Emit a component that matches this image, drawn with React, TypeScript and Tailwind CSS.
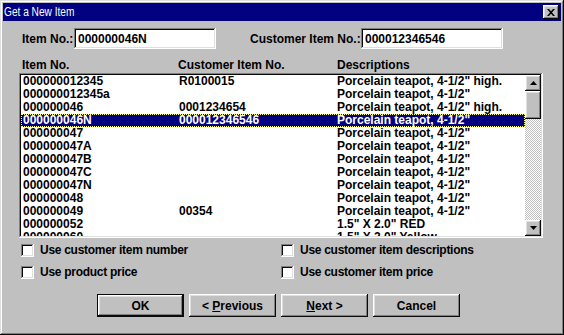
import React from "react";

const btnOut =
  "shadow-[inset_-1px_-1px_#0a0a0a,inset_1px_1px_#ffffff,inset_-2px_-2px_#808080,inset_2px_2px_#dfdfdf]";
const field =
  "shadow-[inset_-1px_-1px_#ffffff,inset_1px_1px_#808080,inset_-2px_-2px_#dfdfdf,inset_2px_2px_#0a0a0a]";

type Row = { item: string; cust: string; desc: string };

const rows: Row[] = [
  { item: "000000012345", cust: "R0100015", desc: 'Porcelain teapot, 4-1/2" high.' },
  { item: "000000012345a", cust: "", desc: 'Porcelain teapot, 4-1/2"' },
  { item: "000000046", cust: "0001234654", desc: 'Porcelain teapot, 4-1/2" high.' },
  { item: "000000046N", cust: "000012346546", desc: 'Porcelain teapot, 4-1/2"' },
  { item: "000000047", cust: "", desc: 'Porcelain teapot, 4-1/2"' },
  { item: "000000047A", cust: "", desc: 'Porcelain teapot, 4-1/2"' },
  { item: "000000047B", cust: "", desc: 'Porcelain teapot, 4-1/2"' },
  { item: "000000047C", cust: "", desc: 'Porcelain teapot, 4-1/2"' },
  { item: "000000047N", cust: "", desc: 'Porcelain teapot, 4-1/2"' },
  { item: "000000048", cust: "", desc: 'Porcelain teapot, 4-1/2"' },
  { item: "000000049", cust: "00354", desc: 'Porcelain teapot, 4-1/2"' },
  { item: "000000052", cust: "", desc: '1.5" X 2.0" RED' },
  { item: "000000060", cust: "", desc: '1.5" X 2.0" Yellow' },
];

function Arrow({ up }: { up: boolean }) {
  return (
    <svg width="7" height="4" viewBox="0 0 7 4" className="block">
      {up ? (
        <polygon points="3.5,0 7,4 0,4" fill="#000" />
      ) : (
        <polygon points="0,0 7,0 3.5,4" fill="#000" />
      )}
    </svg>
  );
}

function Check({ label }: { label: string }) {
  return (
    <div className="flex items-center h-[13px]">
      <div className={`w-[13px] h-[13px] bg-white ${field}`} />
      <span className="ml-[6px] leading-[13px] tracking-[-0.28px] whitespace-nowrap">{label}</span>
    </div>
  );
}

export default function App() {
  return (
    <div
      className="w-[564px] h-[335px] bg-[#c0c0c0] p-[3px] text-black text-[12px] font-bold shadow-[inset_-1px_-1px_#0a0a0a,inset_1px_1px_#dfdfdf,inset_-2px_-2px_#808080,inset_2px_2px_#ffffff] overflow-hidden"
      style={{ fontFamily: '"Liberation Sans", Arial, sans-serif' }}
    >
      {/* Title bar */}
      <div className="h-[18px] bg-[#000080] flex items-center justify-between pl-[1px] pr-[2px]">
        <span className="text-white font-normal text-[13px] leading-[18px] inline-block origin-left scale-x-[0.78] whitespace-nowrap">
          Get a New Item
        </span>
        <div className={`w-[16px] h-[14px] bg-[#c0c0c0] flex items-center justify-center ${btnOut}`}>
          <svg width="8" height="7" viewBox="0 0 8 7" className="block">
            <path d="M0 0h2l2 2.3L6 0h2L5 3.5 8 7H6L4 4.7 2 7H0l3-3.5z" fill="#000" />
          </svg>
        </div>
      </div>

      {/* Item No row */}
      <div className="mt-[7px] h-[21px] flex items-center pl-[19px]">
        <span className="w-[52px] whitespace-nowrap">Item No.:</span>
        <div className={`w-[142px] h-[21px] bg-white ${field} flex items-center pl-[4px]`}>
          000000046N
        </div>
        <span className="ml-[34px] w-[111px] whitespace-nowrap">Customer Item No.:</span>
        <div className={`w-[142px] h-[21px] bg-white ${field} flex items-center pl-[4px]`}>
          000012346546
        </div>
      </div>

      {/* Headers */}
      <div className="mt-[10px] h-[13px] flex pl-[19px] leading-[13px]">
        <span className="w-[156px]">Item No.</span>
        <span className="w-[159px]">Customer Item No.</span>
        <span>Descriptions</span>
      </div>

      {/* List */}
      <div className={`mt-[1px] ml-[16px] w-[524px] h-[165px] bg-white p-[2px] flex ${field}`}>
        <div className="flex-1 h-[161px] overflow-hidden">
          {rows.map((r, i) => {
            const sel = i === 3;
            return (
              <div
                key={i}
                className={`h-[13px] leading-[13px] flex pl-[2px] whitespace-nowrap ${
                  sel
                    ? "bg-[#000080] text-white outline-1 outline-dotted outline-[#ffff80] -outline-offset-1"
                    : ""
                }`}
              >
                <span className="w-[156px]">{r.item}</span>
                <span className="w-[158px]">{r.cust}</span>
                <span>{r.desc}</span>
              </div>
            );
          })}
        </div>
        <div className="w-[16px] h-[161px] flex flex-col">
          <div className={`h-[16px] bg-[#c0c0c0] flex items-center justify-center ${btnOut}`}>
            <Arrow up />
          </div>
          <div className={`h-[28px] bg-[#c0c0c0] ${btnOut}`} />
          <div className="flex-1 bg-[conic-gradient(#ffffff_25%,#c0c0c0_0_50%,#ffffff_0_75%,#c0c0c0_0)] bg-[length:2px_2px]" />
          <div className={`h-[16px] bg-[#c0c0c0] flex items-center justify-center ${btnOut}`}>
            <Arrow up={false} />
          </div>
        </div>
      </div>

      {/* Checkboxes */}
      <div className="mt-[6px] pl-[18px] grid grid-cols-[260px_1fr] gap-y-[9px]">
        <Check label="Use customer item number" />
        <Check label="Use customer item descriptions" />
        <Check label="Use product price" />
        <Check label="Use customer item price" />
      </div>

      {/* Buttons */}
      <div className="mt-[15px] ml-[94px] flex gap-[5px]">
        <div className="w-[87px] h-[23px] bg-[#c0c0c0] flex items-center justify-center shadow-[inset_-2px_-2px_#0a0a0a,inset_1px_1px_#0a0a0a,inset_2px_2px_#ffffff,inset_-3px_-3px_#808080,inset_3px_3px_#dfdfdf]">
          OK
        </div>
        <div className={`w-[87px] h-[23px] bg-[#c0c0c0] flex items-center justify-center ${btnOut}`}>
          &lt;&nbsp;<span className="underline">P</span>revious
        </div>
        <div className={`w-[87px] h-[23px] bg-[#c0c0c0] flex items-center justify-center ${btnOut}`}>
          <span className="underline">N</span>ext&nbsp;&gt;
        </div>
        <div className={`w-[87px] h-[23px] bg-[#c0c0c0] flex items-center justify-center ${btnOut}`}>
          Cancel
        </div>
      </div>
    </div>
  );
}
